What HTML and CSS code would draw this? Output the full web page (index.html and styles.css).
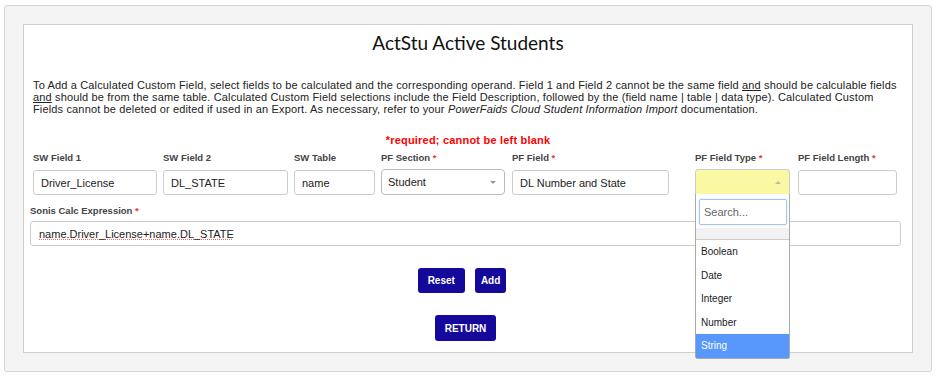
FILE: index.html
```html
<!DOCTYPE html>
<html lang="en">
  <head>
    <meta charset="UTF-8" />
    <meta name="viewport" content="width=device-width, initial-scale=1.0" />
    <title>ActStu Active Students</title>
    <link rel="stylesheet" href="styles.css">
  </head>
  <body>
    <div class="outer-box">
      <div class="form-box">
        <h1>ActStu Active Students</h1>

        <p class="intro">
          To Add a Calculated Custom Field, select fields to be calculated and the corresponding operand. Field 1 and Field 2 cannot be the same field <u>and</u> should be calculable fields <u>and</u> should be from the same table. Calculated Custom Field selections include the Field Description, followed by the (field name | table | data type). Calculated Custom Fields cannot be deleted or edited if used in an Export. As necessary, refer to your <i>PowerFaids Cloud Student Information Import</i> documentation.
        </p>

        <div class="required-note">*required; cannot be left blank</div>

        <div class="field-row">
          <div class="field w-f1">
            <label>SW Field 1</label>
            <input type="text" value="Driver_License" />
          </div>
          <div class="field w-f2">
            <label>SW Field 2</label>
            <input type="text" value="DL_STATE" />
          </div>
          <div class="field w-table">
            <label>SW Table</label>
            <input type="text" value="name" />
          </div>
          <div class="field w-section">
            <label>PF Section <span class="req">*</span></label>
            <div class="select">
              <span>Student</span>
              <span class="arrow"></span>
            </div>
          </div>
          <div class="field w-pffield">
            <label>PF Field <span class="req">*</span></label>
            <input type="text" value="DL Number and State" />
          </div>
          <div class="field w-type">
            <label>PF Field Type <span class="req">*</span></label>
            <div class="select open">
              <span></span>
              <span class="arrow up"></span>
              <!-- open dropdown list -->
              <div class="dropdown">
                <div class="dd-search">
                  <input type="text" placeholder="Search..." />
                </div>
                <div class="dd-blank"></div>
                <ul>
                  <li>Boolean</li>
                  <li>Date</li>
                  <li>Integer</li>
                  <li>Number</li>
                  <li class="active">String</li>
                </ul>
              </div>
            </div>
          </div>
          <div class="field w-length">
            <label>PF Field Length <span class="req">*</span></label>
            <input type="text" value="" />
          </div>
        </div>

        <div class="field calc">
          <label>Sonis Calc Expression <span class="req">*</span></label>
          <input type="text" class="spell" value="name.Driver_License+name.DL_STATE" />
        </div>

        <div class="buttons">
          <button>Reset</button>
          <button class="small">Add</button>
        </div>
        <div class="buttons return">
          <button>RETURN</button>
        </div>
      </div>
    </div>
  </body>
</html>
```

FILE: styles.css
```css
body {
  margin: 5px 4px;
  font-family: "Liberation Sans", Arial, sans-serif;
  color: #222;
}

.outer-box {
  background-color: #f4f4f4;
  border: 1px solid #d4d4d4;
  border-radius: 3px;
  padding: 18px;
}

.form-box {
  background-color: white;
  border: 1px solid #cfcfcf;
  height: 329px;
  box-sizing: border-box;
  padding: 0 9px;
  position: relative;
}

h1 {
  font-family: Lato, "Liberation Sans", sans-serif;
  font-weight: normal;
  font-size: 19px;
  line-height: 22px;
  text-align: center;
  margin: 7px 0 0;
  color: #111;
}

.intro {
  font-size: 11px;
  line-height: 12px;
  letter-spacing: 0.15px;
  margin: 25px 0 0;
  max-width: 864px;
}

.required-note {
  color: #f00;
  font-weight: bold;
  font-size: 11px;
  letter-spacing: 0.2px;
  line-height: 13px;
  text-align: center;
  margin-top: 19px;
}

.field-row {
  display: flex;
  gap: 6px;
  margin-top: 5px;
}

.field label {
  display: block;
  font-size: 9.5px;
  font-weight: bold;
  line-height: 12px;
  color: #444;
  margin-bottom: 6px;
}

.req {
  color: #e33;
}

.field input,
.select {
  display: block;
  width: 100%;
  height: 25px;
  box-sizing: border-box;
  border: 1px solid #ccc;
  border-radius: 3px;
  padding: 0 7px;
  font-family: "Liberation Sans", Arial, sans-serif;
  font-size: 11px;
  color: #222;
  outline: none;
}

.w-f1 { width: 124px; }
.w-f2 { width: 125px; }
.w-table { width: 81px; }
.w-section { width: 124px; }
.w-pffield { width: 157px; margin-left: 1px; }
.w-type { width: 95px; margin-left: 20px; }
.w-length { width: 99px; margin-left: 2px; }

.select {
  display: flex;
  align-items: center;
  justify-content: space-between;
  border-color: #bbb;
  border-radius: 4px;
  position: relative;
  height: 26px;
  margin-top: -1px;
  padding-left: 6px;
}

.arrow {
  width: 0;
  height: 0;
  border-left: 3px solid transparent;
  border-right: 3px solid transparent;
  border-top: 3px solid #999;
  margin-right: 1px;
}

.arrow.up {
  border-top: none;
  border-bottom: 3px solid #bbb;
}

.select.open {
  background-color: #f8f9a2;
  border-color: #ccc;
  border-radius: 3px 3px 0 0;
}

.dropdown {
  position: absolute;
  top: 100%;
  left: -1px;
  right: -1px;
  background: white;
  border: 1px solid #aaa;
  border-top: none;
  border-radius: 0 0 3px 3px;
  z-index: 5;
}

.dd-search {
  padding: 5px 2px 3px 3px;
}

.dd-search input {
  height: 26px;
  border: 1px solid #a9c4e4;
  border-radius: 2px;
  box-shadow: 0 0 2px rgba(102, 175, 233, 0.4);
  padding: 0 4px;
  font-size: 11px;
}

.dd-search input::placeholder {
  color: #666;
}

.dd-blank {
  height: 11px;
  background: #f2f2f2;
  border-bottom: 1px solid #ccc;
}

.dropdown ul {
  list-style: none;
  margin: 0;
  padding: 0;
}

.dropdown li {
  height: 23.6px;
  line-height: 23.6px;
  font-size: 10px;
  padding-left: 5px;
  color: #222;
}

.dropdown li.active {
  background-color: #5897fb;
  color: white;
}

.calc {
  margin: 10px 2px 0 -3px;
}

.calc label {
  margin-bottom: 4px;
}

.calc input {
  padding-left: 8px;
}

.spell {
  text-decoration: underline dotted #f66;
}

.buttons {
  display: flex;
  justify-content: center;
  gap: 10px;
  margin-top: 22px;
  margin-right: 12px;
}

.buttons button {
  background-color: #15099b;
  color: white;
  border: none;
  border-radius: 3px;
  font-family: "Liberation Sans", Arial, sans-serif;
  font-weight: bold;
  font-size: 10px;
  height: 25px;
  padding: 0 10px;
  cursor: pointer;
}

.buttons button.small {
  padding: 0 6px;
}

.buttons.return {
  margin-right: 5px;
}

.buttons.return button {
  height: 26px;
}
```
